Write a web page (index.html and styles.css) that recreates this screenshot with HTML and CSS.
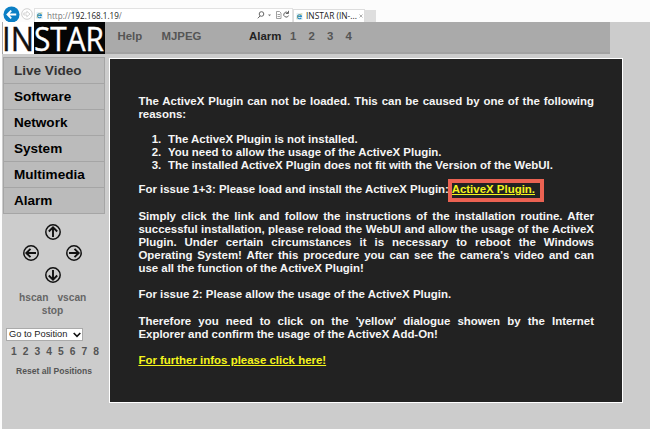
FILE: index.html
```html
<!DOCTYPE html>
<html lang="en">
<head>
<meta charset="utf-8">
<title>INSTAR (IN-...</title>
<link rel="stylesheet" href="styles.css">
</head>
<body>
<div class="browser">
  <svg class="back" viewBox="0 0 18 18"><circle cx="9" cy="9" r="8.5" fill="#0b7fc5"/><path d="M14 9H5M8.7 5L4.7 9l4 4" fill="none" stroke="#fff" stroke-width="1.9"/></svg>
  <svg class="forward" viewBox="0 0 12 12"><circle cx="6" cy="6" r="5.3" fill="#fff" stroke="#c4c4c4" stroke-width=".8"/><path d="M2.8 5h3V3.2L9 6 5.8 8.8V7h-3z" fill="#fff" stroke="#c4c4c4" stroke-width=".7"/></svg>
  <div class="address">
    <svg class="ie" viewBox="0 0 8 8"><rect x=".5" width="7" height="8" fill="#e5eff0"/><path d="M6 5.3A2.3 2.3 0 1 1 6.2 4H2.3" fill="none" stroke="#238cc9" stroke-width="1.3"/><path d="M1 6.6C2 3 4 1.5 7 1" fill="none" stroke="#c8b852" stroke-width=".7"/></svg>
    <span class="url">http://<b>192.168.1.19</b>/</span>
    <svg class="tools" viewBox="0 0 34 10"><g fill="none" stroke="#666"><circle cx="4.5" cy="4" r="2.3"/><path d="M3 6L.8 8.3"/><path d="M19.5 1.5h3l1.5 1.5v5.5h-4.5zM20.5 4.5h2.5M20.5 6.5h2.5" stroke="#888" stroke-width=".8"/><path d="M31 2.8A2.5 2.5 0 1 0 31.6 5.5M31.5 .8v2.7h-2.7"/></g><path d="M11 4.5h3l-1.5 1.8z" fill="#777"/></svg>
  </div>
  <div class="tab">
    <svg class="ie" viewBox="0 0 8 8"><rect x=".5" width="7" height="8" fill="#e5eff0"/><path d="M6 5.3A2.3 2.3 0 1 1 6.2 4H2.3" fill="none" stroke="#238cc9" stroke-width="1.3"/><path d="M1 6.6C2 3 4 1.5 7 1" fill="none" stroke="#c8b852" stroke-width=".7"/></svg>
    <span class="tab-title">INSTAR (IN-...</span>
    <svg class="close" viewBox="0 0 4 4"><path d="M.5 .5l3 3M3.5 .5l-3 3" stroke="#999" stroke-width=".8"/></svg>
  </div>
  <div class="new-tab"></div>
</div>
<div class="page">
  <header class="header">
    <svg class="logo" viewBox="0 0 102 32"><rect width="31" height="32" fill="#fff"/><rect x="31" width="71" height="32" fill="#050505"/><text x="-1" y="28.6" textLength="32" lengthAdjust="spacingAndGlyphs" fill="#111" stroke="#111">IN</text><text x="31" y="28.6" textLength="70" lengthAdjust="spacingAndGlyphs" fill="#fff" stroke="#fff">STAR</text></svg>
    <nav class="top-nav"><span class="help">Help</span><span class="mjpeg">MJPEG</span><span class="alarm">Alarm</span><span class="num">1</span><span class="num">2</span><span class="num">3</span><span class="num">4</span></nav>
  </header>
  <div class="content">
    <aside class="sidebar">
      <nav class="menu"><a class="active">Live Video</a><a>Software</a><a>Network</a><a>System</a><a>Multimedia</a><a>Alarm</a></nav>
      <div class="pad">
        <svg class="up" viewBox="0 0 16 16"><circle cx="8" cy="8" r="7.2"/><path d="M8 13V3.5M3.8 7.5L8 3.3l4.2 4.2"/></svg>
        <svg class="left" viewBox="0 0 16 16"><circle cx="8" cy="8" r="7.2"/><path d="M13 8H3.5M7.5 3.8L3.3 8l4.2 4.2"/></svg>
        <svg class="right" viewBox="0 0 16 16"><circle cx="8" cy="8" r="7.2"/><path d="M3 8h9.5M8.5 3.8L12.7 8l-4.2 4.2"/></svg>
        <svg class="down" viewBox="0 0 16 16"><circle cx="8" cy="8" r="7.2"/><path d="M8 3v9.5M3.8 8.5L8 12.7l4.2-4.2"/></svg>
      </div>
      <div class="scan"><span>hscan</span><span>vscan</span></div>
      <div class="stop">stop</div>
      <div class="select"><span>Go to Position</span><svg viewBox="0 0 8 6"><path d="M.7 1L4 4.4 7.3 1" fill="none" stroke="#111" stroke-width="1.6"/></svg></div>
      <div class="positions"><span>1</span><span>2</span><span>3</span><span>4</span><span>5</span><span>6</span><span>7</span><span>8</span></div>
      <div class="reset">Reset all Positions</div>
    </aside>
    <main class="panel">
      <p>The ActiveX Plugin can not be loaded. This can be caused by one of the following reasons:</p>
      <ol><li>The ActiveX Plugin is not installed.</li><li>You need to allow the usage of the ActiveX Plugin.</li><li>The installed ActiveX Plugin does not fit with the Version of the WebUI.</li></ol>
      <p class="install">For issue 1+3: Please load and install the ActiveX Plugin: <a class="marked">ActiveX Plugin.</a></p>
      <p>Simply click the link and follow the instructions of the installation routine. After successful installation, please reload the WebUI and allow the usage of the ActiveX Plugin. Under certain circumstances it is necessary to reboot the Windows Operating System! After this procedure you can see the camera's video and can use all the function of the ActiveX Plugin!</p>
      <p>For issue 2: Please allow the usage of the ActiveX Plugin.</p>
      <p>Therefore you need to click on the 'yellow' dialogue showen by the Internet Explorer and confirm the usage of the ActiveX Add-On!</p>
      <p><a>For further infos please click here!</a></p>
    </main>
  </div>
</div>
</body>
</html>
```
FILE: styles.css
```css
* { box-sizing: border-box; }
body { margin: 0; width: 650px; height: 429px; overflow: hidden; background: #fcfcfc; font-family: "Liberation Sans", Arial, sans-serif; }
svg { display: block; flex: none; }
.browser { height: 22px; display: flex; align-items: flex-start; }
.back { width: 17px; height: 17px; margin: 6px 0 0 3px; }
.forward { width: 12px; height: 12px; margin: 8px 0 0 1px; }
.address { width: 259px; height: 14px; margin: 8px 0 0 1px; border: 1px solid #e2e2e2; border-bottom: 0; background: #fff; display: flex; align-items: center; }
.ie { width: 7px; height: 7px; }
.address .ie { margin-left: 1px; }
.url { width: 76px; margin-left: 4px; font: 8.1px/12px "Open Sans", sans-serif; color: #777; white-space: nowrap; }
.url b { color: #222; font-weight: 400; }
.tools { width: 34px; height: 10px; margin: -1px 0 0 134px; }
.tab { width: 72px; height: 13px; margin: 9px 0 0; border: 1px solid #ddd; border-bottom: 0; background: #fff; display: flex; align-items: center; }
.tab .ie { margin-left: 2px; }
.tab-title { width: 53px; margin-left: 3px; font: 8.4px/12px "Open Sans", sans-serif; color: #222; white-space: nowrap; }
.close { width: 4px; height: 4px; }
.new-tab { width: 11px; height: 12px; margin-top: 10px; background: #dedede; }
.page { height: 407px; margin-left: 2px; background: #ccc; }
.header { height: 32px; width: 608px; display: flex; background: #aaa; border-bottom: 2px solid #a2a2a2; }
.logo { width: 102px; height: 32px; font: 33.5px "Open Sans", sans-serif; stroke-width: .4; overflow: visible; margin-left: 1px; }
.top-nav { display: flex; font-weight: 700; font-size: 11.4px; line-height: 29px; color: #555; }
.help { width: 44px; margin-left: 12.5px; }
.mjpeg { width: 87.5px; }
.alarm { width: 41px; color: #222; }
.num { width: 18.5px; }
.content { display: flex; align-items: flex-start; }
.sidebar { width: 107px; }
.menu { width: 102px; margin: 3px 0 0 1px; border: 1px solid #a5a5a5; }
.menu a { display: block; height: 26px; padding-left: 10px; font-size: 13.55px; font-weight: 700; line-height: 25px; color: #000; background: #bbb; border-bottom: 1px solid #a5a5a5; }
.menu a:last-child { border-bottom: 0; height: 25px; }
.menu .active { color: #333; }
.pad { width: 64.5px; height: 60px; margin: 7px 0 0 18.5px; display: grid; grid-template-columns: repeat(3, 1fr); grid-template-rows: repeat(3, 21.5px); place-items: center; }
.pad svg { width: 16px; height: 16px; fill: none; stroke: #111; stroke-width: 1.5; }
.pad path { stroke-width: 1.9; }
.up { grid-area: 1 / 2; }
.left { grid-area: 2 / 1; }
.right { grid-area: 2 / 3; }
.down { grid-area: 3 / 2; }
.scan { display: flex; gap: 9px; margin: 10px 0 0 17px; font-size: 10.2px; font-weight: 700; line-height: 13px; color: #666; }
.stop { width: 101px; text-align: center; font-size: 10.2px; font-weight: 700; line-height: 13px; color: #666; }
.select { width: 77px; height: 13px; margin: 11px 0 0 4px; padding: 0 1px 0 2px; display: flex; align-items: center; justify-content: space-between; border: 1px solid #aaa; background: #fff; font-size: 9.3px; line-height: 11px; color: #222; white-space: nowrap; }
.select svg { width: 8px; height: 6px; }
.positions { display: flex; width: 88px; justify-content: space-between; margin: 4px 0 0 9px; font-size: 10.3px; font-weight: 700; line-height: 13px; color: #555; }
.reset { margin: 7px 0 0 14px; font-size: 8.55px; font-weight: 700; line-height: 12px; color: #555; white-space: nowrap; }
.panel { width: 514px; height: 345px; margin-top: 4px; padding: 35.5px 28px 0 28.4px; background: #222; border: 1px solid #fff; color: #f5f5f5; font-size: 11.46px; font-weight: 700; line-height: 13.15px; text-align: justify; }
p { margin: 0 0 13.15px; }
ol { margin: -1.3px 0 11.6px; padding-left: 26px; line-height: 13px; }
li { padding-left: 3.5px; }
.panel a { color: #f4f51c; text-decoration: underline; }
.install { white-space: nowrap; }
.panel .marked { position: relative; }
.marked::after { content: ""; box-sizing: border-box; position: absolute; left: -4px; top: -4px; width: 96px; height: 23px; border: 4px solid #eb6252; }
```
